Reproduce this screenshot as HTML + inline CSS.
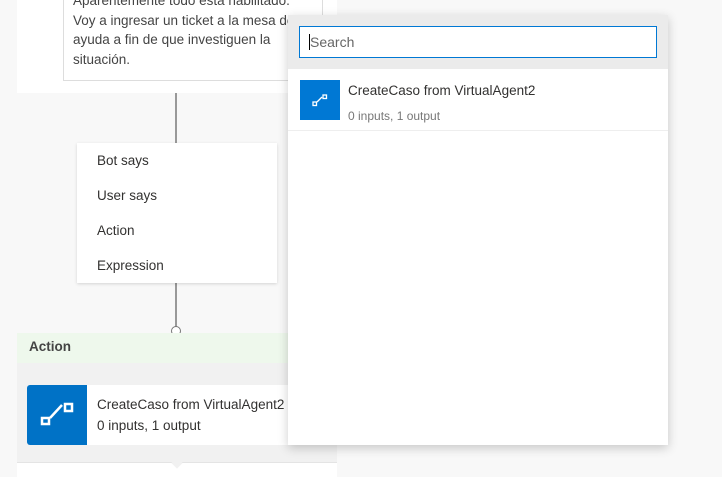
<!DOCTYPE html>
<html><head><style>
body{margin:0;width:722px;height:477px;background:#f8f8f8;position:relative;overflow:hidden;font-family:"Segoe UI","Liberation Sans",sans-serif;color:#323130}
div{position:absolute;box-sizing:border-box}
.t{font-size:13.5px}
</style></head><body>
<div style="left:17px;top:0;width:320px;height:93px;background:#fff"></div>
<div style="left:63px;top:-5px;width:260px;height:86px;border:1px solid #ddd;background:#fff"></div>
<div class="t" style="left:73px;top:-9px;width:245px;line-height:19.5px;color:#444">Aparentemente todo está habilitado.<br>Voy a ingresar un ticket a la mesa de<br>ayuda a fin de que investiguen la<br>situación.</div>
<div style="left:175px;top:93px;width:2px;height:50px;background:#999"></div>
<div style="left:175px;top:283px;width:2px;height:44px;background:#999"></div>
<div style="left:171px;top:326px;width:10px;height:10px;border:1px solid #777;border-radius:50%;background:#fff"></div>
<div style="left:77px;top:143px;width:200px;height:140px;background:#fff;box-shadow:0 1px 3px rgba(0,0,0,.15)"></div>
<div class="t" style="left:97px;top:143px;line-height:35px">Bot says<br>User says<br>Action<br>Expression</div>
<div style="left:17px;top:333px;width:320px;height:30px;background:#eef8ec"></div>
<div style="left:29px;top:339px;font-size:13.5px;font-weight:bold;color:#444">Action</div>
<div style="left:17px;top:363px;width:320px;height:99px;background:#f1f1f1"></div>
<div style="left:27px;top:385px;width:300px;height:60px;background:#fff;border-radius:3px"></div>
<div style="left:27px;top:385px;width:60px;height:60px;background:#0072c6;border-radius:3px 0 0 3px">
<svg width="60" height="60"><g fill="none" stroke="#fff" stroke-width="2.5"><rect x="15" y="33" width="7" height="6"/><rect x="38" y="19" width="7" height="7"/><path d="M23 33 L35 20"/></g></svg></div>
<div class="t" style="left:97px;top:394px;line-height:21px">CreateCaso from VirtualAgent2<br>0 inputs, 1 output</div>
<div style="left:17px;top:462px;width:320px;height:15px;background:#fff;border-top:1px solid #e4e4e4"></div>
<div style="left:173px;top:459px;width:8px;height:8px;background:#f1f1f1;transform:rotate(45deg)"></div>
<div style="left:288px;top:15px;width:380px;height:430px;background:#fff;box-shadow:0 3px 10px rgba(0,0,0,.2)"></div>
<div style="left:288px;top:15px;width:380px;height:54px;background:#ebebeb"></div>
<div style="left:299px;top:26px;width:358px;height:32px;background:#fff;border:1px solid #0078d4"></div>
<div style="left:309px;top:34px;width:1px;height:16px;background:#000"></div>
<div style="left:310px;top:34px;font-size:14px;color:#666">Search</div>
<div style="left:288px;top:130px;width:380px;height:1px;background:#eee"></div>
<div style="left:300px;top:80px;width:40px;height:40px;background:#0078d4">
<svg width="40" height="40"><g fill="none" stroke="#fff" stroke-width="1.3"><rect x="13" y="22" width="3.5" height="3.5"/><rect x="23" y="15" width="3.5" height="3.5"/><path d="M17 22 L22 17"/></g></svg></div>
<div class="t" style="left:348px;top:83px">CreateCaso from VirtualAgent2</div>
<div style="left:348px;top:109px;font-size:12px;color:#777">0 inputs, 1 output</div>
</body></html>
